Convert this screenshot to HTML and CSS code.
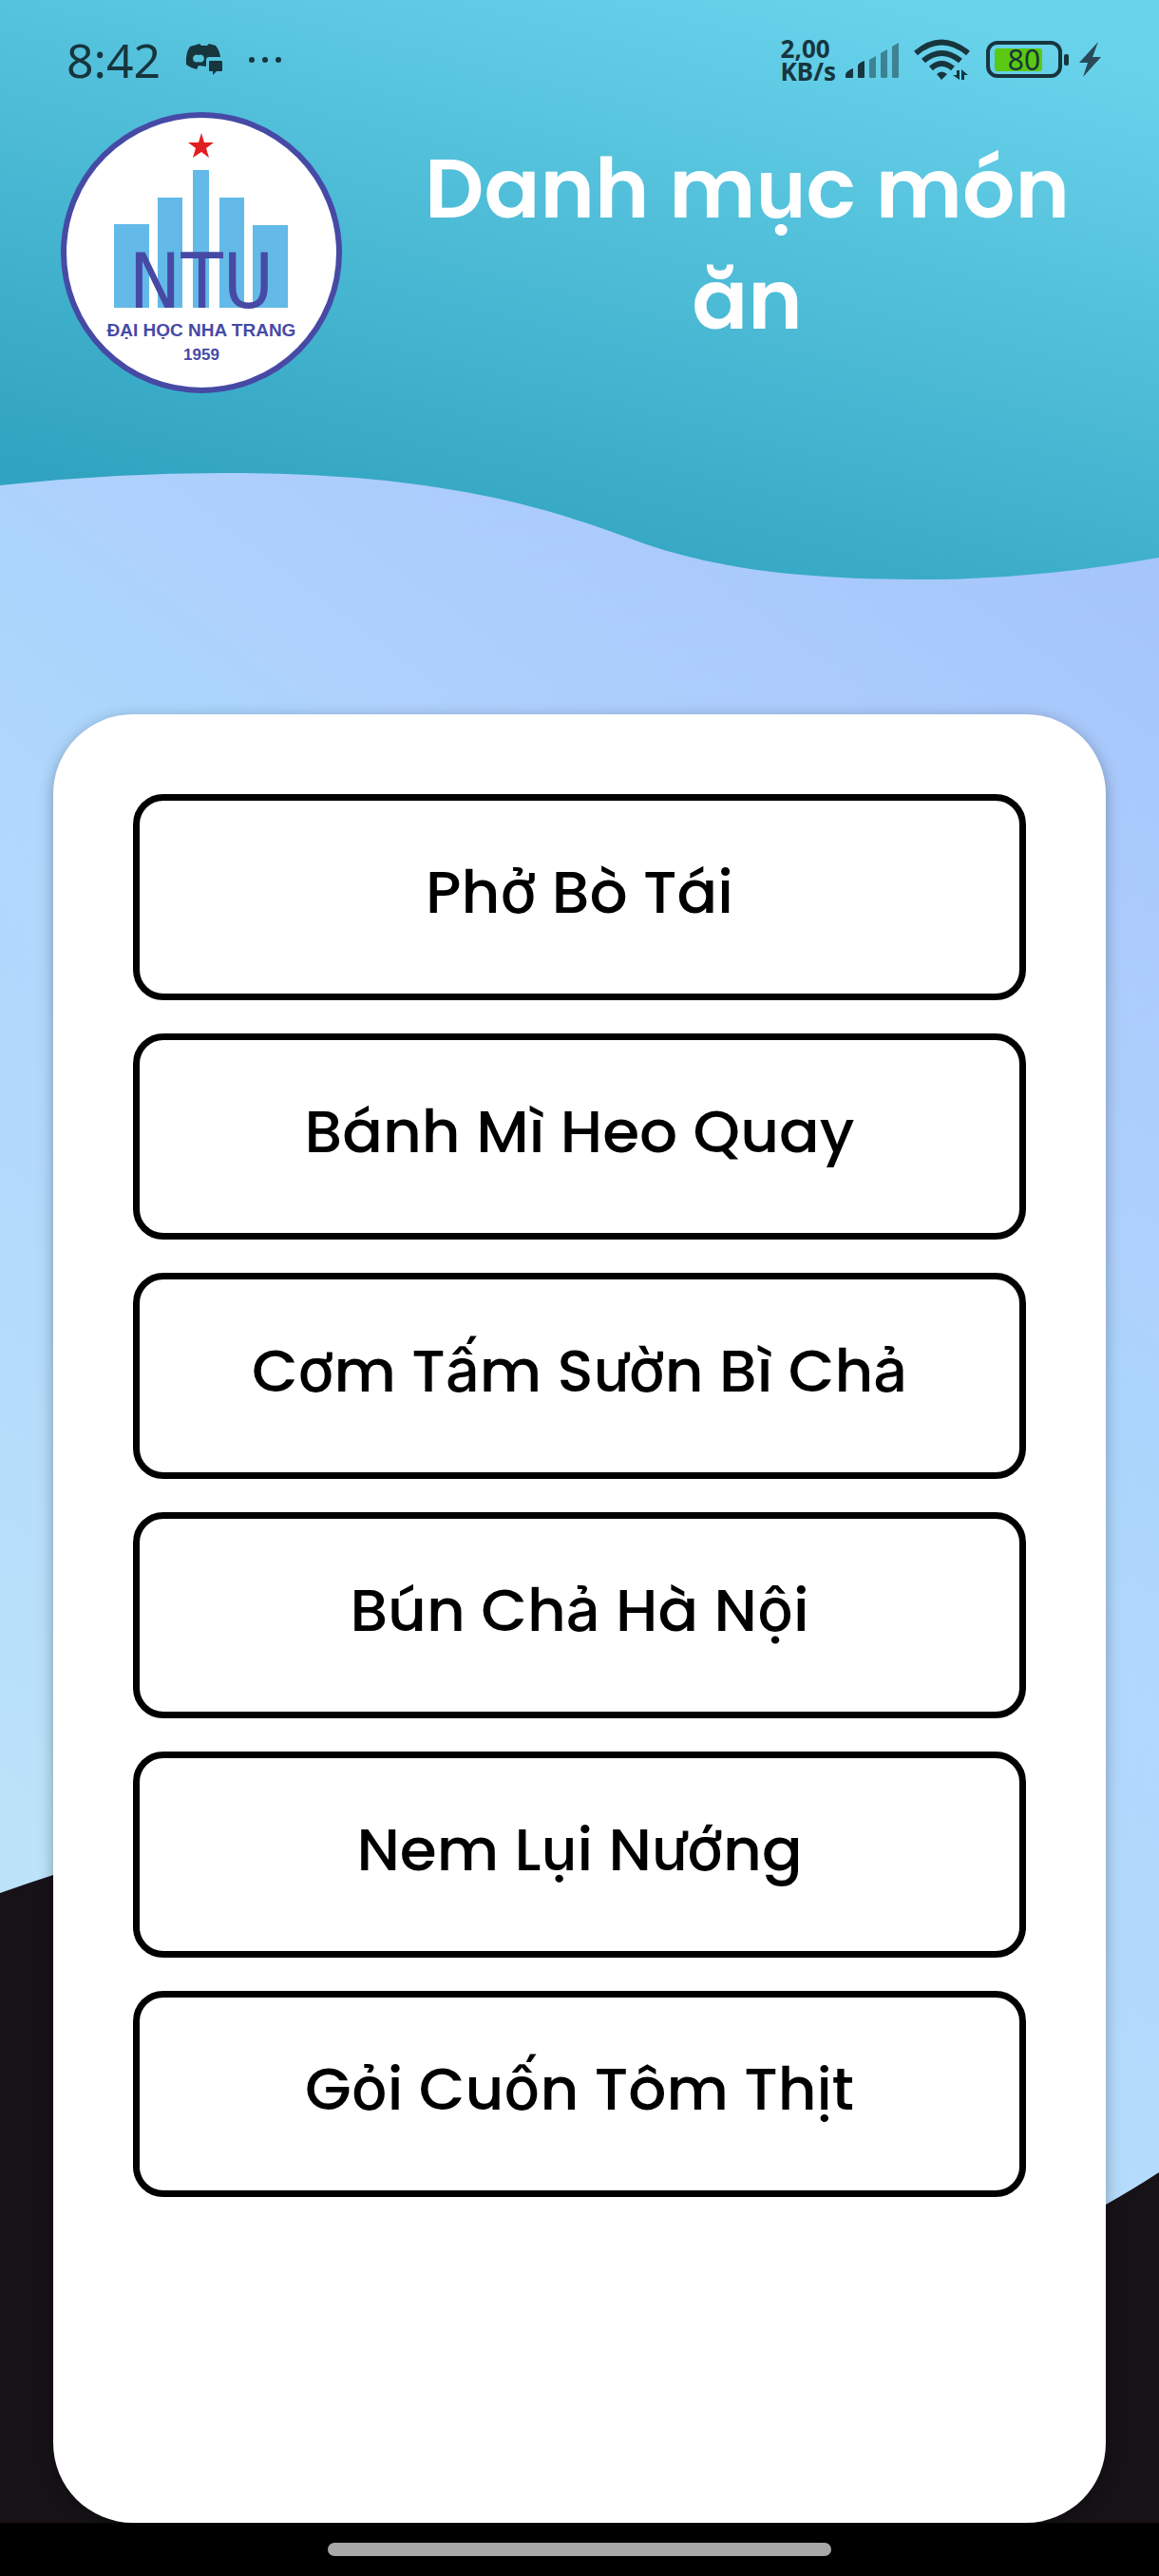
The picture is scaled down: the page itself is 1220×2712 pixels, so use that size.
FILE: index.html
```html
<!DOCTYPE html>
<html lang="vi">
<head>
<meta charset="utf-8">
<meta name="viewport" content="width=device-width, initial-scale=1">
<title>Danh mục món ăn</title>
<link rel="stylesheet" href="styles.css">
</head>
<body>
<svg class="backdrop" viewBox="0 0 1220 2656" preserveAspectRatio="none" aria-hidden="true">
  <defs>
    <linearGradient id="sea" gradientUnits="userSpaceOnUse" x1="440" y1="600" x2="610" y2="-70">
      <stop offset="0" stop-color="#30a3c0"/>
      <stop offset="1" stop-color="#68d2eb"/>
    </linearGradient>
    <linearGradient id="sky" gradientUnits="userSpaceOnUse" x1="1220" y1="580" x2="123" y2="2042">
      <stop offset="0" stop-color="#a5c5fb"/>
      <stop offset="0.34" stop-color="#afd1fd"/>
      <stop offset="0.4" stop-color="#abd5fc"/>
      <stop offset="0.5" stop-color="#b0d7fd"/>
      <stop offset="0.75" stop-color="#b4dbfb"/>
      <stop offset="1" stop-color="#bce3f9"/>
    </linearGradient>
  </defs>
  <rect width="1220" height="2656" fill="url(#sky)"/>
  <path d="M0 0H1220V587Q1090 610 972 610C850 610 760 600 680 573C590 540 480 498 235 498Q120 498 0 511Z" fill="url(#sea)"/>
  <path d="M0 1993Q28 1983 56 1974C440 1870 760 2540 1164 2321Q1194 2304 1220 2287V2656H0Z" fill="#161217"/>
</svg>

<div class="screen">
  <div class="status">
    <div class="status-group">
      <span class="clock">8:42</span>
      <svg class="chat" viewBox="0 0 40 36" aria-label="Discord">
        <path fill="#17353d" fill-rule="evenodd" d="M12 2L15 1L17 3H23L25 1L32 3Q36 8 37 15H25Q22 15 22 18V25L14 24L12 28Q6 27 1 23Q0 11 5 4ZM14 13A4 4 0 1 0 14 20A4 4 0 1 0 14 13Z"/>
        <path fill="#17353d" d="M26 19H38Q39 19 39 20V29Q39 30 38 30H33L29 34V30H26Q25 30 25 29V20Q25 19 26 19Z"/>
      </svg>
      <svg class="more" viewBox="0 0 36 8" aria-label="Thêm"><g fill="#17353d"><circle cx="4" cy="4" r="3"/><circle cx="18" cy="4" r="3"/><circle cx="32" cy="4" r="3"/></g></svg>
    </div>
    <div class="status-group status-right">
      <span class="speed">2,00<br>KB/s</span>
      <svg class="signal" viewBox="0 0 56 37" aria-label="Sóng">
        <g fill="#17353d"><path d="M0 36V34Q0 30 8 27V36Q8 37 7 37H1Q0 37 0 36ZM13 36V24Q14 21 20 19V36Q20 37 19 37H14Q13 37 13 36Z"/>
        <path opacity=".5" d="M25 36V18L32 14V36L31 37H26ZM37 36V11L44 7V36L43 37H38ZM49 36V4L56 0V36L55 37H50Z"/></g>
      </svg>
      <svg class="wifi" viewBox="0 0 60 44" aria-label="Wi-Fi">
        <g fill="none" stroke="#17353d" stroke-width="6"><path d="M2 15Q29-8 57 15M10 23Q29 7 49 23M18 31Q29 21 41 31"/></g>
        <path fill="#17353d" d="M24 37Q29 32 35 37L29 43ZM41 38H45V33H48V43ZM50 43V32L57 38H53V43Z"/>
      </svg>
      <svg class="battery" viewBox="0 0 88 40" aria-label="Pin 80%">
        <rect x="2" y="2" width="76" height="35" rx="10" fill="none" stroke="#17353d" stroke-width="4"/>
        <rect x="9" y="8" width="50" height="24" rx="3" fill="#5bc811"/>
        <rect x="82" y="14" width="5" height="12" rx="2" fill="#17353d"/>
        <text x="40" y="31" class="battery-text">80</text>
      </svg>
      <svg class="bolt" viewBox="0 0 24 38" aria-label="Đang sạc"><path fill="#294957" d="M20 0L0 22H9L4 37L23 16H14Z"/></svg>
    </div>
  </div>

  <header class="header">
    <svg class="logo" viewBox="0 0 298 298" role="img" aria-label="Đại học Nha Trang">
      <circle cx="149" cy="149" r="145" fill="#fff" stroke="#464aa5" stroke-width="6"/>
      <path fill="#e11f20" d="M149 23L152 33H162L154 39L157 49L149 43L140 49L143 39L135 33H146Z"/>
      <path fill="#63b9e7" d="M57 119H94V207H57ZM103 91H129V207H103ZM140 62H157V207H140ZM168 91H194V207H168ZM203 120H240V207H203Z"/>
      <text x="149" y="207" class="logo-big">NTU</text>
      <text x="149" y="237" class="logo-name">ĐẠI HỌC NHA TRANG</text>
      <text x="149" y="262" class="logo-year">1959</text>
    </svg>
    <h1 class="title">Danh mục món ăn</h1>
  </header>

  <main class="card">
    <button class="dish" type="button">Phở Bò Tái</button>
    <button class="dish" type="button">Bánh Mì Heo Quay</button>
    <button class="dish" type="button">Cơm Tấm Sườn Bì Chả</button>
    <button class="dish" type="button">Bún Chả Hà Nội</button>
    <button class="dish" type="button">Nem Lụi Nướng</button>
    <button class="dish" type="button">Gỏi Cuốn Tôm Thịt</button>
  </main>

  <div class="navbar"><div class="handle"></div></div>
</div>
</body>
</html>
```

FILE: styles.css
```css
* { box-sizing: border-box; }

body {
  margin: 0;
  position: relative;
  background: #000;
  font-family: Poppins, Inter, "Noto Sans", sans-serif;
}

svg { display: block; flex: none; }

.backdrop {
  position: absolute;
  top: 0;
  left: 0;
  width: 100%;
  height: calc(100% - 56px);
}

.screen {
  position: relative;
  display: flex;
  flex-direction: column;
  min-height: 100vh;
}

.status {
  display: flex;
  justify-content: space-between;
  height: 117px;
  padding: 8px 60px 0 70px;
  color: #17353d;
}

.status-group {
  display: flex;
  align-items: center;
  height: 110px;
  gap: 26px;
}

.status-right { gap: 10px; }

.clock {
  font-family: "Noto Sans", sans-serif;
  font-size: 50px;
  line-height: 60px;
}

.chat { width: 40px; height: 36px; }
.more { width: 36px; height: 8px; }

.speed {
  font-family: "Noto Sans", sans-serif;
  font-size: 26px;
  font-weight: 700;
  line-height: 24px;
}

.signal { width: 56px; height: 37px; }
.wifi { width: 60px; height: 44px; margin: 0 6px; }
.battery { width: 88px; height: 40px; }
.bolt { width: 24px; height: 38px; }

.battery-text {
  font-family: "Noto Sans", sans-serif;
  font-size: 30px;
  text-anchor: middle;
  fill: #17353d;
}

.header {
  display: flex;
  gap: 64px;
  height: 635px;
  padding: 0 72px 0 63px;
}

.logo { width: 298px; height: 298px; }

.logo text {
  font-family: "Liberation Sans", Arial, sans-serif;
  text-anchor: middle;
  fill: #464aa5;
}

.logo .logo-big {
  font-family: "DejaVu Sans Condensed", "DejaVu Sans", sans-serif;
  font-stretch: condensed;
  font-size: 81px;
}
.logo .logo-name { font-size: 19px; font-weight: 700; }
.logo .logo-year { font-size: 17px; font-weight: 700; }

.title {
  flex: 1;
  margin: 0;
  padding-top: 23px;
  color: #fff;
  font-size: 87px;
  font-weight: 600;
  line-height: 117px;
  text-align: center;
}

.card {
  display: flex;
  flex: 1;
  flex-direction: column;
  gap: 35px;
  margin: 0 56px;
  padding: 84px;
  border-radius: 84px;
  background: #fff;
  box-shadow: 0 4px 16px rgba(0, 0, 0, 0.3);
}

.dish {
  height: 217px;
  padding: 0 0 12px;
  border: 7px solid #000;
  border-radius: 32px;
  background: #fff;
  color: #000;
  font-family: inherit;
  font-size: 63px;
  font-weight: 500;
  line-height: 92px;
}

.navbar {
  display: flex;
  align-items: center;
  justify-content: center;
  height: 56px;
  background: #000;
}

.handle {
  width: 530px;
  max-width: 60%;
  height: 14px;
  border-radius: 7px;
  background: #a8a8a8;
}
```
